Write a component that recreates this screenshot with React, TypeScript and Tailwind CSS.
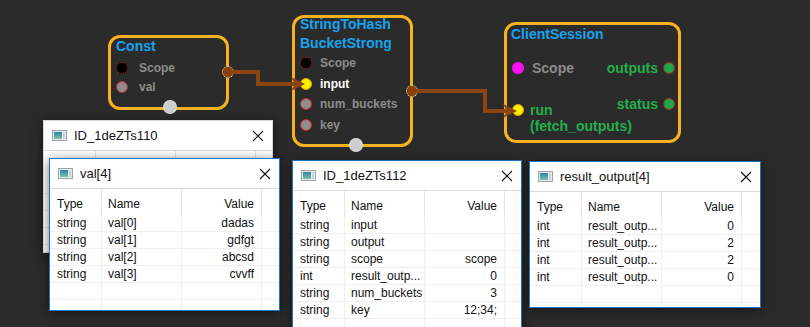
import React from 'react'

// Graph editor canvas: three nodes, two wires, four floating watch windows

type Row = [string, string, string]

function TitleIcon() {
  return (
    <div className="w-[15px] h-[11px] border border-[#9aa3a8] bg-[#e8ecee] flex p-[1px]">
      <div className="w-[8px] h-full bg-gradient-to-b from-[#2e7fb0] to-[#7ec49a]" />
      <div className="flex-1 bg-[#c9d3d8] ml-[1px]" />
    </div>
  )
}

function CloseX() {
  return (
    <svg width="12" height="12" viewBox="0 0 12 12" className="shrink-0">
      <path d="M1 1 L11 11 M11 1 L1 11" stroke="#111" strokeWidth="1.1" />
    </svg>
  )
}

function WatchWindow({ title, rows, emptyRows, className, active = true }: {
  title: string
  rows: Row[]
  emptyRows: number
  className: string
  active?: boolean
}) {
  // the inactive window sits behind another one, its header is covered
  const head = active ? ['Type', 'Name', 'Value'] : ['', '', '']
  return (
    <div
      className={
        'absolute bg-white overflow-hidden shadow-[0_2px_10px_rgba(0,0,0,0.55)] font-normal text-[#111] ' +
        (active ? 'border border-[#1b78c9] ' : 'border border-[#d9d9d9] ') +
        className
      }
    >
      <div className="h-[30px] flex items-center pl-[8px] pr-[8px] border-b border-[#dcdcdc]">
        <TitleIcon />
        <span className="ml-[7px] text-[13px] flex-1">{title}</span>
        <CloseX />
      </div>
      <div className="grid grid-cols-[52px_80px_80px_1fr] text-[12px]">
        <div className="h-[26px] pt-[3px] flex items-center pl-[7px] border-r border-[#e4e4e4]">{head[0]}</div>
        <div className="h-[26px] pt-[3px] flex items-center pl-[6px] border-r border-[#e4e4e4]">{head[1]}</div>
        <div className="h-[26px] pt-[3px] flex items-center justify-end pr-[7px] border-r border-[#e4e4e4]">{head[2]}</div>
        <div className="h-[26px]" />
        {rows.map((r, i) => (
          <React.Fragment key={i}>
            <div className="h-[17px] leading-[16px] pl-[7px] border-r border-b border-[#efefef]">{r[0]}</div>
            <div className="h-[17px] leading-[16px] pl-[6px] border-r border-b border-[#efefef] whitespace-nowrap">{r[1]}</div>
            <div className="h-[17px] leading-[16px] pr-[7px] text-right border-r border-b border-[#efefef]">{r[2]}</div>
            <div className="h-[17px] border-b border-[#efefef]" />
          </React.Fragment>
        ))}
        {Array.from({ length: emptyRows }).map((_, i) => (
          <React.Fragment key={'e' + i}>
            <div className="h-[17px] border-r border-b border-[#efefef]" />
            <div className="h-[17px] border-r border-b border-[#efefef]" />
            <div className="h-[17px] border-r border-b border-[#efefef]" />
            <div className="h-[17px] border-b border-[#efefef]" />
          </React.Fragment>
        ))}
      </div>
    </div>
  )
}

const pinDead = 'w-[12px] h-[12px] rounded-full bg-black border border-dotted border-[#d0202a] shrink-0'
const pinGrey = 'w-[12px] h-[12px] rounded-full bg-[#8e8e8e] border border-[#c4262e] shrink-0'
const pinOut = 'absolute w-[12px] h-[12px] rounded-full bg-[#8a3f0c] border border-dotted border-[#d8eab0]'
const pinBottom = 'absolute w-[14px] h-[14px] rounded-full bg-[#cfcfcf] border border-dotted border-[#f2f2f2]'

export default function App() {
  return (
    <div className="relative w-[810px] h-[327px] overflow-hidden bg-[#2b2b2b] font-['Liberation_Sans',Arial,sans-serif] font-bold">
      {/* Const */}
      <div className="absolute left-[108px] top-[35px] w-[121px] h-[75px] border-[3px] border-[#f6b31f] rounded-[12px]">
        <div className="pl-[5px] text-[14px] leading-[16px] text-[#16a3ee]">Const</div>
        <div className="mt-[4px] flex flex-col text-[12px] text-[#8c8c8c]">
          <div className="h-[19px] flex items-center pl-[5px] gap-[11px]">
            <div className={pinDead} />
            <span>Scope</span>
          </div>
          <div className="h-[19px] flex items-center pl-[5px] gap-[11px]">
            <div className={pinGrey} />
            <span>val</span>
          </div>
        </div>
        <div className={pinOut + ' right-[-8px] top-[28px]'} />
        <div className={pinBottom + ' left-[52px] top-[62px]'} />
      </div>

      {/* StringToHashBucketStrong */}
      <div className="absolute left-[292px] top-[15px] w-[121px] h-[132px] border-[3px] border-[#f6b31f] rounded-[12px]">
        <div className="-mt-[3px] pl-[5px] text-[14px] leading-[19px] text-[#16a3ee]">
          <div>StringToHash</div>
          <div>BucketStrong</div>
        </div>
        <div className="flex flex-col text-[12px] text-[#8c8c8c]">
          <div className="h-[20.5px] flex items-center pl-[5px] gap-[8px]">
            <div className={pinDead} />
            <span>Scope</span>
          </div>
          <div className="h-[20.5px] flex items-center pl-[5px] gap-[8px]">
            <div className="w-[12px] h-[12px] rounded-full bg-[#ffee00] border border-[#e0a000] shrink-0" />
            <span className="text-white">input</span>
          </div>
          <div className="h-[20.5px] flex items-center pl-[5px] gap-[8px]">
            <div className={pinGrey} />
            <span>num_buckets</span>
          </div>
          <div className="h-[20.5px] flex items-center pl-[5px] gap-[8px]">
            <div className={pinGrey} />
            <span>key</span>
          </div>
        </div>
        <div className={pinOut + ' right-[-8px] top-[67px]'} />
        <div className={pinBottom + ' left-[54px] top-[120px]'} />
      </div>

      {/* ClientSession */}
      <div className="absolute left-[504px] top-[22px] w-[177px] h-[121px] border-[3px] border-[#f6b31f] rounded-[12px]">
        <div className="pl-[4px] text-[14px] leading-[18px] text-[#16a3ee]">ClientSession</div>
        <div className="grid text-[14px]">
          <div className="[grid-area:1/1] mt-[15px] flex flex-col">
            <div className="h-[20px] flex items-center pl-[5px] gap-[8px]">
              <div className="w-[12px] h-[12px] rounded-full bg-[#ff10f0] shrink-0" />
              <span className="text-[#8c8c8c]">Scope</span>
            </div>
            <div className="mt-[24px] flex items-start pl-[5px] gap-[6px]">
              <div className="mt-[2px] w-[12px] h-[12px] rounded-full bg-[#ffee00] border border-[#e0a000] shrink-0" />
              <div className="leading-[16px] text-[#22b04c]">
                <div>run</div>
                <div>(fetch_outputs)</div>
              </div>
            </div>
          </div>
          <div className="[grid-area:1/1] justify-self-end mt-[15px] flex flex-col items-end pr-[3px] text-[#22b04c]">
            <div className="h-[20px] flex items-center gap-[5px]">
              <span>outputs</span>
              <div className="w-[12px] h-[12px] rounded-full bg-[#1fa54a] border border-[#9a2a22]" />
            </div>
            <div className="mt-[16px] h-[20px] flex items-center gap-[5px]">
              <span>status</span>
              <div className="w-[12px] h-[12px] rounded-full bg-[#1fa54a] border border-[#9a2a22]" />
            </div>
          </div>
        </div>
      </div>

      {/* wires */}
      <svg className="absolute left-0 top-0 pointer-events-none" width="810" height="327">
        <path d="M233 72 H258 V84 H298" fill="none" stroke="#8b4510" strokeWidth="4" />
        <polygon points="291,77 305,84 291,91 295,84" fill="#8b4510" />
        <path d="M417 91 H485 V111 H510" fill="none" stroke="#8b4510" strokeWidth="4" />
        <polygon points="503,104 517,111 503,118 507,111" fill="#8b4510" />
      </svg>

      {/* watch windows */}
      <WatchWindow
        className="left-[43px] top-[120px] w-[230px] h-[133px]"
        title="ID_1deZTs110"
        rows={[]}
        emptyRows={6}
        active={false}
      />
      <WatchWindow
        className="left-[49px] top-[158px] w-[231px] h-[153px]"
        title="val[4]"
        rows={[
          ['string', 'val[0]', 'dadas'],
          ['string', 'val[1]', 'gdfgt'],
          ['string', 'val[2]', 'abcsd'],
          ['string', 'val[3]', 'cvvff'],
        ]}
        emptyRows={2}
      />
      <WatchWindow
        className="left-[292px] top-[160px] w-[230px] h-[180px]"
        title="ID_1deZTs112"
        rows={[
          ['string', 'input', ''],
          ['string', 'output', ''],
          ['string', 'scope', 'scope'],
          ['int', 'result_outp...', '0'],
          ['string', 'num_buckets', '3'],
          ['string', 'key', '12;34;'],
        ]}
        emptyRows={1}
      />
      <WatchWindow
        className="left-[529px] top-[161px] w-[232px] h-[147px]"
        title="result_output[4]"
        rows={[
          ['int', 'result_outp...', '0'],
          ['int', 'result_outp...', '2'],
          ['int', 'result_outp...', '2'],
          ['int', 'result_outp...', '0'],
        ]}
        emptyRows={2}
      />
    </div>
  )
}
